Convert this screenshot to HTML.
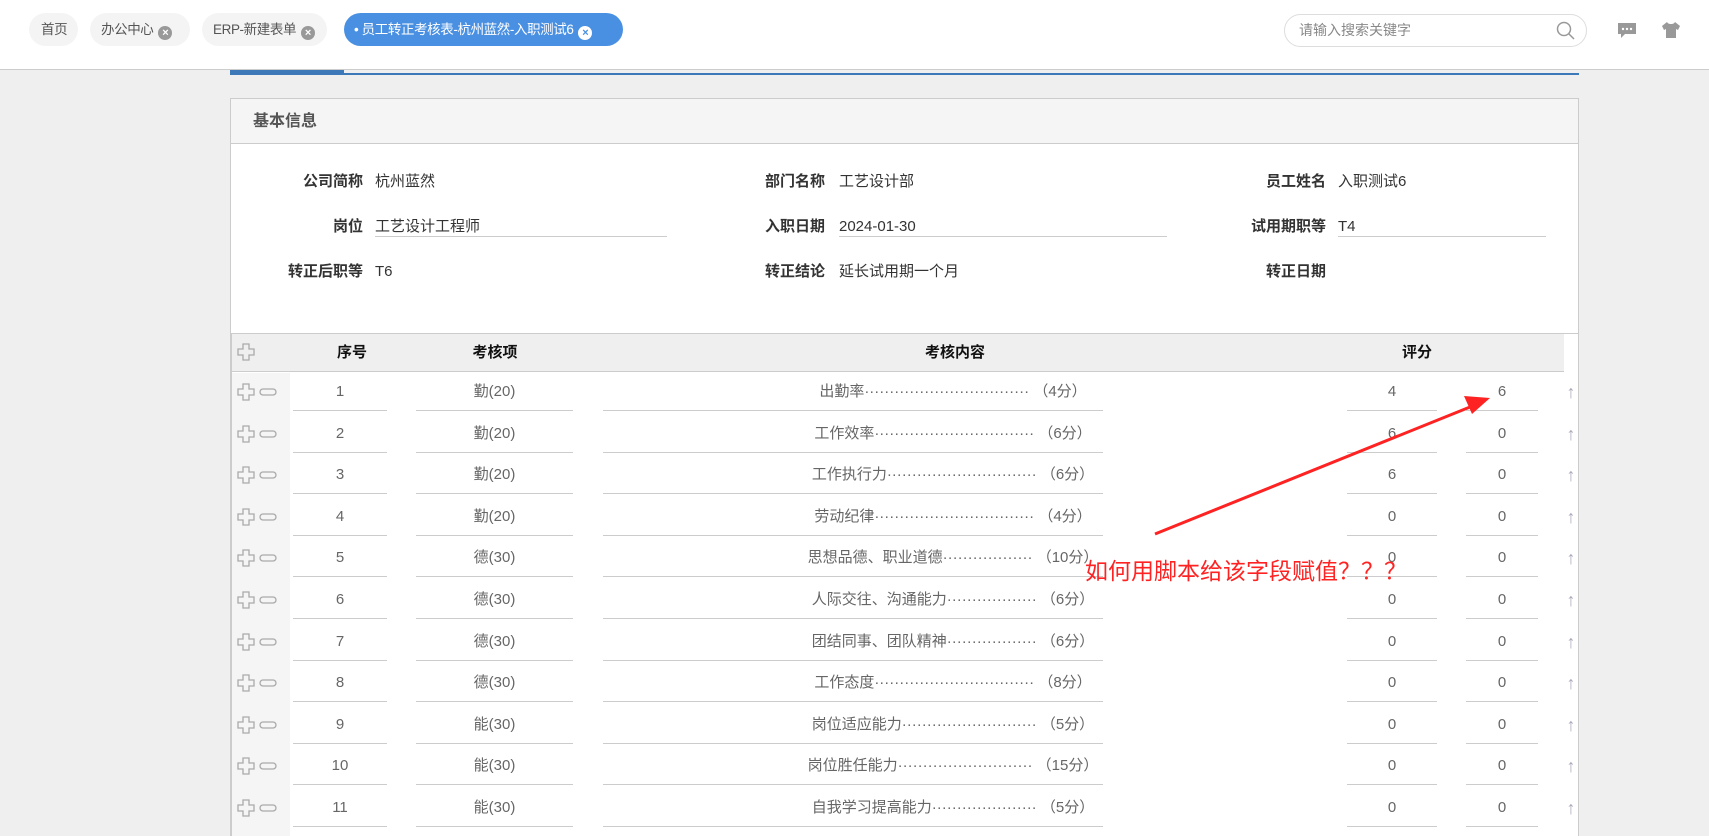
<!DOCTYPE html>
<html style="width:1709px;height:836px;overflow:hidden"><head><meta charset="utf-8"><style>
*{margin:0;padding:0;box-sizing:border-box}
body{width:1709px;height:836px;overflow:hidden;background:#efefef;font-family:"Liberation Sans","Noto Sans CJK SC",sans-serif;font-size:15px;color:#333;position:relative;line-height:20px}
.abs{position:absolute}
.top{left:0;top:0;width:1709px;height:70px;background:#fff;border-bottom:1px solid #ccc}
.tab{position:absolute;top:13px;height:33px;border-radius:17px;background:#f4f4f4;color:#555;font-size:13.5px;line-height:33px;padding-left:11px;white-space:nowrap;overflow:hidden;letter-spacing:-0.4px}
.x{display:inline-block;width:14px;height:14px;border-radius:50%;background:#999;color:#fff;font-size:11px;line-height:14px;text-align:center;margin-left:5px;vertical-align:-2px;font-weight:bold;letter-spacing:0}
.panel{left:230px;top:98px;width:1349px;height:738px;background:#fff;border:1px solid #ccc;border-bottom:none}
.lbl{position:absolute;text-align:right;color:#333;font-weight:bold;font-size:15px;line-height:20px}
.val{position:absolute;color:#333;font-size:15px;line-height:20px}
.ul{position:absolute;height:1px;background:#ccc}
.c{position:absolute;text-align:center;color:#666;font-size:15px;line-height:20px}
.h{position:absolute;text-align:center;color:#111;font-weight:bold;font-size:15px;line-height:20px}
</style></head><body>
<div class="abs top"></div>
<div class="tab" style="left:29px;width:49px;padding-left:12px">首页</div>
<div class="tab" style="left:90px;width:100px">办公中心<span class="x">×</span></div>
<div class="tab" style="left:202px;width:125px">ERP-新建表单<span class="x">×</span></div>
<div class="tab" style="left:344px;width:279px;background:#4a90e2;color:#fff;padding-left:10px">• 员工转正考核表-杭州蓝然-入职测试6<span class="x" style="background:#fff;color:#4a90e2">×</span></div>
<div class="abs" style="left:1284px;top:14px;width:303px;height:33px;border:1px solid #ddd;border-radius:17px;background:#fff;color:#888;font-size:14px;line-height:31px;padding-left:14px">请输入搜索关键字
<svg class="abs" style="right:10px;top:6px" width="20" height="20" viewBox="0 0 20 20"><circle cx="8" cy="8" r="6.5" fill="none" stroke="#999" stroke-width="1.5"/><line x1="13" y1="13" x2="18" y2="18" stroke="#999" stroke-width="1.5"/></svg></div>
<svg class="abs" style="left:1617px;top:22px" width="20" height="18" viewBox="0 0 20 18"><path d="M1 1h18v11H8l-4 4v-4H1z" fill="#999"/><circle cx="6" cy="7" r="1.2" fill="#fff"/><circle cx="10" cy="7" r="1.2" fill="#fff"/><circle cx="14" cy="7" r="1.2" fill="#fff"/></svg>
<svg class="abs" style="left:1661px;top:20px" width="20" height="20" viewBox="0 0 20 20"><path d="M6 2l-5 4 2 4 2-1v9h10V9l2 1 2-4-5-4c-1 2-3 2-4 2s-3 0-4-2z" fill="#999"/></svg>
<div class="abs" style="left:230px;top:73px;width:1349px;height:2px;background:#3d78b9"></div>
<div class="abs" style="left:230px;top:70px;width:114px;height:5px;background:#3d78b9"></div>
<div class="abs panel"></div>
<div class="abs" style="left:231px;top:99px;width:1347px;height:45px;background:#f5f5f5;border-bottom:1px solid #ccc;font-size:16px;font-weight:bold;color:#555;line-height:45px;padding-left:22px">基本信息</div>

<div class="lbl" style="left:200px;width:163px;top:172px">公司简称</div><div class="val" style="left:375px;top:172px">杭州蓝然</div>
<div class="lbl" style="left:660px;width:165px;top:172px">部门名称</div><div class="val" style="left:839px;top:172px">工艺设计部</div>
<div class="lbl" style="left:1160px;width:166px;top:172px">员工姓名</div><div class="val" style="left:1338px;top:172px">入职测试6</div>
<div class="lbl" style="left:200px;width:163px;top:217px">岗位</div><div class="val" style="left:375px;top:217px">工艺设计工程师</div><div class="ul" style="left:375px;width:292px;top:236px"></div>
<div class="lbl" style="left:660px;width:165px;top:217px">入职日期</div><div class="val" style="left:839px;top:217px">2024-01-30</div><div class="ul" style="left:839px;width:328px;top:236px"></div>
<div class="lbl" style="left:1160px;width:166px;top:217px">试用期职等</div><div class="val" style="left:1338px;top:217px">T4</div><div class="ul" style="left:1338px;width:208px;top:236px"></div>
<div class="lbl" style="left:200px;width:163px;top:262px">转正后职等</div><div class="val" style="left:375px;top:262px">T6</div>
<div class="lbl" style="left:660px;width:165px;top:262px">转正结论</div><div class="val" style="left:839px;top:262px">延长试用期一个月</div>
<div class="lbl" style="left:1160px;width:166px;top:262px">转正日期</div>

<div class="abs" style="left:230px;top:333px;width:1349px;height:1px;background:#ccc"></div>
<div class="abs" style="left:230px;top:333px;width:2px;height:503px;background:#ccc"></div>
<div class="abs" style="left:232px;top:334px;width:1332px;height:38px;background:#efefef;border-bottom:1px solid #ccc"></div>
<div class="abs" style="left:232px;top:373px;width:58px;height:463px;background:#f5f5f5"></div>
<svg class="abs" style="left:237px;top:343px" width="18" height="18" viewBox="0 0 18 18"><path d="M6 1h6v5h5v6h-5v5H6v-5H1V6h5z" fill="none" stroke="#aaa" stroke-width="1.3"/></svg>
<div class="h" style="left:312px;width:80px;top:343px">序号</div>
<div class="h" style="left:455px;width:80px;top:343px">考核项</div>
<div class="h" style="left:880px;width:150px;top:343px">考核内容</div>
<div class="h" style="left:1377px;width:80px;top:343px">评分</div>

<div id="rows"></div>
<script>
var d=[["勤(20)","出勤率·································&nbsp;（4分）","4","6"],
["勤(20)","工作效率································&nbsp;（6分）","6","0"],
["勤(20)","工作执行力······························&nbsp;（6分）","6","0"],
["勤(20)","劳动纪律································&nbsp;（4分）","0","0"],
["德(30)","思想品德、职业道德··················&nbsp;（10分）","0","0"],
["德(30)","人际交往、沟通能力··················&nbsp;（6分）","0","0"],
["德(30)","团结同事、团队精神··················&nbsp;（6分）","0","0"],
["德(30)","工作态度································&nbsp;（8分）","0","0"],
["能(30)","岗位适应能力···························&nbsp;（5分）","0","0"],
["能(30)","岗位胜任能力···························&nbsp;（15分）","0","0"],
["能(30)","自我学习提高能力·····················&nbsp;（5分）","0","0"]];
var h="";
for(var i=0;i<d.length;i++){var y=382+i*41.6,u=410+i*41.6;
h+='<svg class="abs" style="left:237px;top:'+(y+1)+'px" width="40" height="18" viewBox="0 0 40 18"><path d="M6 1h6v5h5v6h-5v5H6v-5H1V6h5z" fill="none" stroke="#aaa" stroke-width="1.3"/><rect x="23" y="6" width="16" height="6" rx="3" fill="none" stroke="#aaa" stroke-width="1.3"/></svg>';
h+='<div class="c" style="left:293px;width:94px;top:'+y+'px">'+(i+1)+'</div><div class="ul" style="left:293px;width:94px;top:'+u+'px"></div>';
h+='<div class="c" style="left:416px;width:157px;top:'+y+'px">'+d[i][0]+'</div><div class="ul" style="left:416px;width:157px;top:'+u+'px"></div>';
h+='<div class="c" style="left:753px;width:400px;top:'+y+'px;white-space:nowrap">'+d[i][1]+'</div><div class="ul" style="left:603px;width:500px;top:'+u+'px"></div>';
h+='<div class="c" style="left:1347px;width:90px;top:'+y+'px">'+d[i][2]+'</div><div class="ul" style="left:1347px;width:90px;top:'+u+'px"></div>';
h+='<div class="c" style="left:1466px;width:72px;top:'+y+'px">'+d[i][3]+'</div><div class="ul" style="left:1466px;width:72px;top:'+u+'px"></div>';
h+='<div class="c" style="left:1563px;width:16px;top:'+y+'px;color:#aab;font-size:18px">↑</div>';}
document.getElementById("rows").innerHTML=h;
</script>
<svg class="abs" style="left:0;top:0" width="1709" height="836"><line x1="1155" y1="534" x2="1475" y2="405" stroke="#f22" stroke-width="3"/><path d="M1490 398l-26 -2 8 18z" fill="#f22"/></svg>
<div class="abs" style="left:1085px;top:556px;color:#f22;font-size:23px;white-space:nowrap;line-height:30px">如何用脚本给该字段赋值？？？</div>
</body></html>
